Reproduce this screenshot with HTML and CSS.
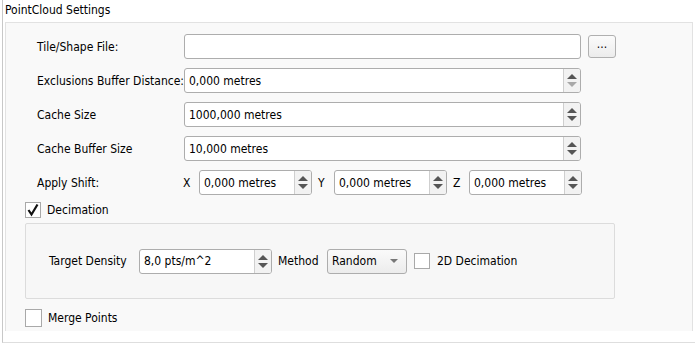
FILE: index.html
```html
<!DOCTYPE html>
<html lang="en">
<head>
  <meta charset="UTF-8" />
  <title>PointCloud Settings</title>
  <link rel="stylesheet" href="styles.css">
</head>
<body>
  <div class="frame">
    <div class="title">PointCloud Settings</div>

    <div class="panel">
      <div class="row">
        <label class="lbl">Tile/Shape File:</label>
        <div class="field wide"></div>
        <button class="browse">...</button>
      </div>

      <div class="row">
        <label class="lbl">Exclusions Buffer Distance:</label>
        <div class="spin wide">
          <span class="val">0,000 metres</span>
          <span class="arrows"><i class="up"></i><i class="down off"></i></span>
        </div>
      </div>

      <div class="row">
        <label class="lbl">Cache Size</label>
        <div class="spin wide">
          <span class="val">1000,000 metres</span>
          <span class="arrows"><i class="up"></i><i class="down"></i></span>
        </div>
      </div>

      <div class="row">
        <label class="lbl">Cache Buffer Size</label>
        <div class="spin wide">
          <span class="val">10,000 metres</span>
          <span class="arrows"><i class="up"></i><i class="down"></i></span>
        </div>
      </div>

      <div class="row">
        <label class="lbl short">Apply Shift:</label>
        <span class="axis">X</span>
        <div class="spin shift">
          <span class="val">0,000 metres</span>
          <span class="arrows"><i class="up"></i><i class="down"></i></span>
        </div>
        <span class="axis">Y</span>
        <div class="spin shift">
          <span class="val">0,000 metres</span>
          <span class="arrows"><i class="up"></i><i class="down"></i></span>
        </div>
        <span class="axis">Z</span>
        <div class="spin shift">
          <span class="val">0,000 metres</span>
          <span class="arrows"><i class="up"></i><i class="down"></i></span>
        </div>
      </div>

      <div class="check-row">
        <span class="box checked">
          <svg width="14" height="14" viewBox="0 0 14 14"><path d="M2.5 7 L5.5 11.5 L11.5 1.5" fill="none" stroke="#111" stroke-width="2.2"/></svg>
        </span>
        <span>Decimation</span>
      </div>

      <div class="group">
        <label class="density-lbl">Target Density</label>
        <div class="spin density">
          <span class="val">8,0 pts/m^2</span>
          <span class="arrows"><i class="up"></i><i class="down"></i></span>
        </div>
        <label class="method-lbl">Method</label>
        <div class="combo">
          <span>Random</span>
          <i class="caret"></i>
        </div>
        <span class="box"></span>
        <label>2D Decimation</label>
      </div>

      <div class="check-row merge">
        <span class="box"></span>
        <span>Merge Points</span>
      </div>
    </div>
  </div>
</body>
</html>
```

FILE: styles.css
```css
body {
  margin: 0;
  background: #fff;
  font-family: "DejaVu Sans Condensed", "DejaVu Sans", Tahoma, sans-serif;
  font-size: 12px;
  color: #000;
}

.frame {
  width: 693px;
  height: 343px;
  box-sizing: border-box;
  margin-left: 2px;
  border-left: 1px solid #c8c8c8;
  border-bottom: 1px solid #dedede;
}

.title {
  height: 22px;
  line-height: 21px;
  padding-left: 2px;
}

.panel {
  width: 688px;
  height: 309px;
  box-sizing: border-box;
  margin-left: 2px;
  background: #f9f9f9;
  border: 1px solid #e2e2e2;
  border-bottom: none;
  padding: 11px 0 0 31px;
}

.row {
  display: flex;
  align-items: center;
  height: 25px;
  margin-bottom: 9px;
}

.lbl {
  width: 147px;
  flex-shrink: 0;
}

.lbl.short {
  width: 146px;
}

.field, .spin {
  height: 25px;
  box-sizing: border-box;
  background: #fff;
  border: 1px solid #adadad;
  border-radius: 3px;
}

.wide {
  width: 397px;
}

.spin {
  display: flex;
  align-items: center;
}

.val {
  flex: 1;
  padding-left: 4px;
}

.arrows {
  width: 16px;
  height: 100%;
  border-left: 1px solid #cfcfcf;
  background: #f2f2f2;
  border-radius: 0 2px 2px 0;
  display: flex;
  flex-direction: column;
  align-items: center;
  justify-content: center;
  gap: 3px;
}

.up, .down {
  width: 0;
  height: 0;
  border-left: 5px solid transparent;
  border-right: 5px solid transparent;
}

.up {
  border-bottom: 5px solid #555;
}

.down {
  border-top: 5px solid #555;
}

.down.off {
  border-top-color: #a8a8a8;
}

.browse {
  margin-left: 7px;
  width: 28px;
  height: 23px;
  padding: 0 0 5px;
  font: inherit;
  color: #000;
  background: linear-gradient(#fbfbfb, #ececec);
  border: 1px solid #b0b0b0;
  border-radius: 3px;
}

.axis {
  width: 16px;
  flex-shrink: 0;
}

.shift {
  width: 113px;
  margin-right: 6px;
}

.check-row {
  display: flex;
  align-items: center;
  gap: 6px;
  margin-left: -12px;
  height: 16px;
  margin-top: -2px;
}

.box {
  width: 16px;
  height: 16px;
  box-sizing: border-box;
  border: 1px solid #a9a9a9;
  background: #fff;
  display: flex;
  align-items: center;
  justify-content: center;
  flex-shrink: 0;
}

.group {
  width: 590px;
  height: 76px;
  box-sizing: border-box;
  margin: 5px 0 0 -12px;
  border: 1px solid #dcdcdc;
  border-radius: 2px;
  background: #f7f7f7;
  display: flex;
  align-items: center;
  gap: 7px;
  padding: 0 0 0 23px;
}

.density-lbl {
  width: 83px;
}

.method-lbl {
  width: 42px;
  margin-left: -1px;
}

.density {
  width: 133px;
}

.combo {
  width: 80px;
  height: 25px;
  box-sizing: border-box;
  border: 1px solid #adadad;
  border-radius: 3px;
  background: linear-gradient(#fafafa, #ececec);
  display: flex;
  align-items: center;
  justify-content: space-between;
  padding: 0 8px 0 4px;
}

.caret {
  width: 0;
  height: 0;
  border-left: 4px solid transparent;
  border-right: 4px solid transparent;
  border-top: 4px solid #777;
}

.merge {
  margin-top: 10px;
  height: 18px;
}

.merge .box {
  width: 17px;
  height: 18px;
}
```
